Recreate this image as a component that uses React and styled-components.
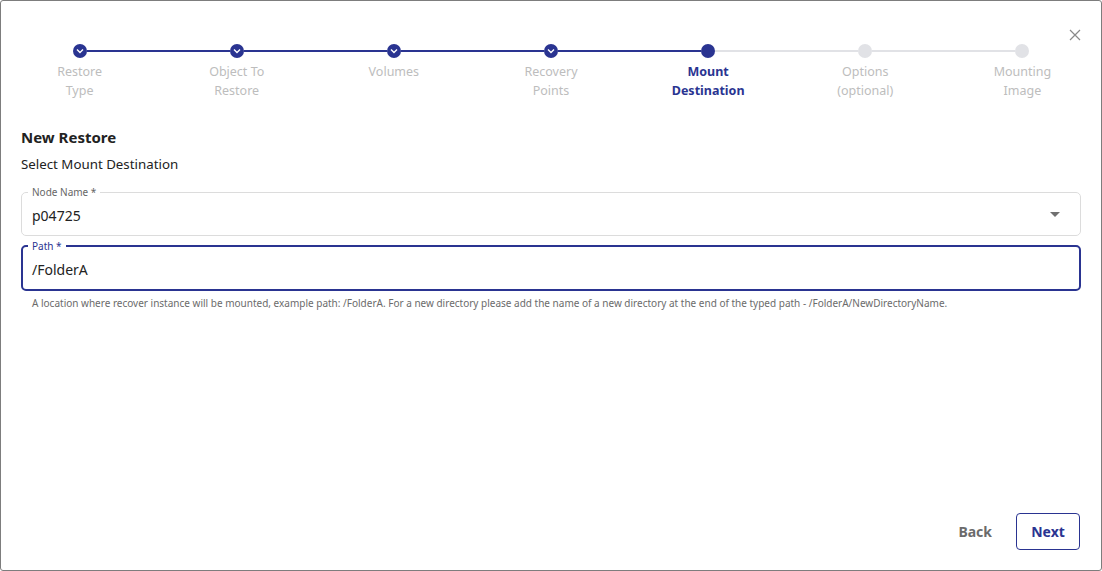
import styled, { createGlobalStyle } from "styled-components";

const navy = "#2a3491";
const GlobalStyle = createGlobalStyle`
  html, body { margin: 0; padding: 0; background: #fff; }
  body { font-family: "Noto Sans", "Open Sans", sans-serif; }
  * { box-sizing: border-box; }
`;

const Frame = styled.div`
  position: relative;
  width: 1102px;
  height: 571px;
  border: 1px solid #7d7d7d;
  border-radius: 3px;
  background: #fff;
  display: flex;
  flex-direction: column;
  overflow: hidden;
`;

const CloseButton = styled.button`
  position: absolute;
  top: 27px;
  right: 19px;
  width: 14px;
  height: 14px;
  padding: 0;
  border: none;
  background: none;
  color: #8a8a8a;
  cursor: pointer;
  display: flex;
`;

const Stepper = styled.div`
  display: grid;
  grid-template-columns: repeat(7, 1fr);
  margin-top: 43px;
`;

const Step = styled.div`
  position: relative;
  display: flex;
  flex-direction: column;
  align-items: center;
`;

const Connector = styled.div`
  position: absolute;
  top: 6px;
  left: calc(-50% + 7px);
  right: calc(50% + 7px);
  height: 2px;
  background: ${(p) => (p.$done ? navy : "#e1e2e6")};
`;

const Dot = styled.div`
  width: 14px;
  height: 14px;
  border-radius: 50%;
  background: ${(p) => (p.$state === "todo" ? "#e1e2e6" : navy)};
  display: flex;
  align-items: center;
  justify-content: center;
  position: relative;
  z-index: 1;
`;

const StepLabel = styled.div`
  margin-top: 4px;
  font-size: 12.5px;
  line-height: 19px;
  text-align: center;
  color: ${(p) => (p.$active ? navy : "#bdbdbd")};
  font-weight: ${(p) => (p.$active ? 700 : 400)};
`;

const Body = styled.div`
  padding: 0 20px;
  margin-top: 27px;
  flex: 1;
`;

const Title = styled.h2`
  margin: 0;
  font-size: 15px;
  font-weight: 700;
  color: #222;
  line-height: 20px;
`;

const Subtitle = styled.p`
  margin: 7px 0 0;
  font-size: 13.3px;
  color: #222;
  line-height: 20px;
`;

const Field = styled.div`
  position: relative;
  margin-top: ${(p) => p.$mt}px;
  height: ${(p) => (p.$focused ? 46 : 44)}px;
  border: ${(p) => (p.$focused ? `2px solid ${navy}` : "1px solid #dcdcdc")};
  border-radius: 5px;
  display: flex;
  align-items: center;
  padding: 0 ${(p) => (p.$focused ? 9 : 10)}px;
`;

const FieldLabel = styled.span`
  position: absolute;
  top: -7px;
  left: ${(p) => (p.$focused ? 5 : 6)}px;
  padding: 0 4px;
  background: #fff;
  font-size: 10px;
  line-height: 12px;
  color: ${(p) => (p.$focused ? navy : "#666")};
`;

const FieldValue = styled.span`
  flex: 1;
  font-size: 14px;
  color: #222;
  padding-top: 3px;
`;

const Caret = styled.span`
  width: 0;
  height: 0;
  border-left: 5px solid transparent;
  border-right: 5px solid transparent;
  border-top: 5px solid #707070;
  margin-right: 10px;
`;

const Helper = styled.p`
  margin: 6px 0 0 11px;
  font-size: 10px;
  color: #6b6b6b;
  line-height: 13px;
`;

const Footer = styled.div`
  display: flex;
  justify-content: flex-end;
  align-items: center;
  gap: 24px;
  padding: 0 21px 20px 0;
`;

const TextButton = styled.button`
  border: none;
  background: none;
  font-family: inherit;
  font-size: 14px;
  font-weight: 700;
  color: #6b6b6b;
  padding: 0;
  cursor: pointer;
`;

const OutlineButton = styled.button`
  width: 64px;
  height: 37px;
  border: 1px solid ${navy};
  border-radius: 4px;
  background: #fff;
  font-family: inherit;
  font-size: 14px;
  font-weight: 700;
  color: ${navy};
  cursor: pointer;
`;

const steps = [
  ["Restore", "Type"],
  ["Object To", "Restore"],
  ["Volumes"],
  ["Recovery", "Points"],
  ["Mount", "Destination"],
  ["Options", "(optional)"],
  ["Mounting", "Image"],
];
const activeStep = 4;

const Check = () => (
  <svg width="8" height="6" viewBox="0 0 8 6">
    <path d="M1 1.5 L4 4.5 L7 1.5" fill="none" stroke="#fff" strokeWidth="1.4" />
  </svg>
);

export default function App() {
  return (
    <>
      <GlobalStyle />
      <Frame>
        <CloseButton aria-label="close">
          <svg width="14" height="14" viewBox="0 0 14 14">
            <path d="M2 2 L12 12 M12 2 L2 12" stroke="currentColor" strokeWidth="1.2" />
          </svg>
        </CloseButton>
        <Stepper>
          {steps.map((lines, i) => {
            const state = i < activeStep ? "done" : i === activeStep ? "active" : "todo";
            return (
              <Step key={i}>
                {i > 0 && <Connector $done={i <= activeStep} />}
                <Dot $state={state}>{state === "done" && <Check />}</Dot>
                <StepLabel $active={state === "active"}>
                  {lines.map((l) => (
                    <div key={l}>{l}</div>
                  ))}
                </StepLabel>
              </Step>
            );
          })}
        </Stepper>
        <Body>
          <Title>New Restore</Title>
          <Subtitle>Select Mount Destination</Subtitle>
          <Field $mt={18}>
            <FieldLabel>Node Name *</FieldLabel>
            <FieldValue>p04725</FieldValue>
            <Caret />
          </Field>
          <Field $mt={9} $focused>
            <FieldLabel $focused>Path *</FieldLabel>
            <FieldValue>/FolderA</FieldValue>
          </Field>
          <Helper>
            A location where recover instance will be mounted, example path: /FolderA. For a new
            directory please add the name of a new directory at the end of the typed path -
            /FolderA/NewDirectoryName.
          </Helper>
        </Body>
        <Footer>
          <TextButton>Back</TextButton>
          <OutlineButton>Next</OutlineButton>
        </Footer>
      </Frame>
    </>
  );
}
